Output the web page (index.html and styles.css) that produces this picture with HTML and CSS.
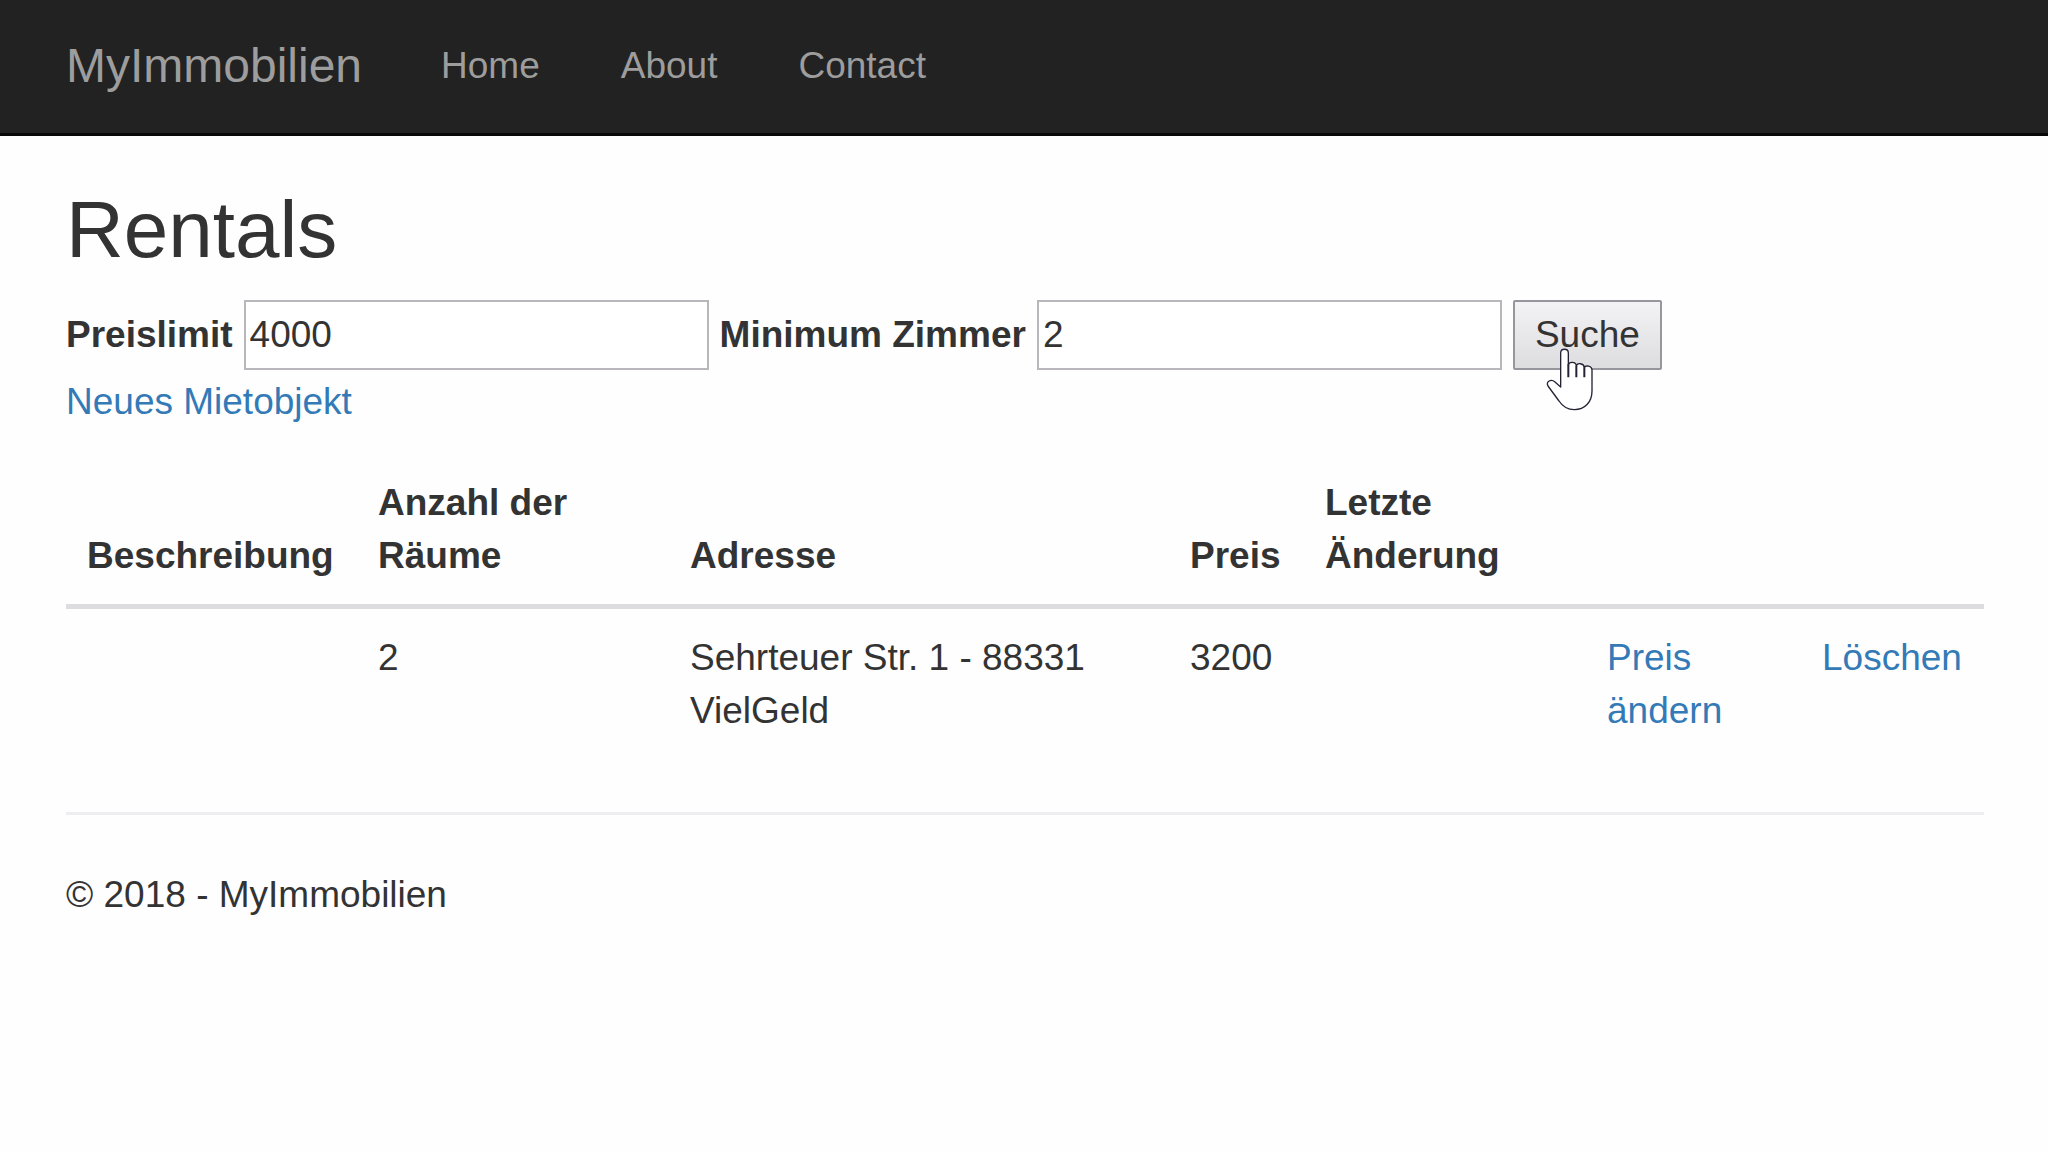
FILE: index.html
```html
<!DOCTYPE html>
<html lang="de">
<head>
<meta charset="utf-8">
<meta name="viewport" content="width=device-width, initial-scale=1">
<title>Rentals - MyImmobilien</title>
<link rel="stylesheet" href="styles.css">
</head>
<body>
<header class="navbar">
  <a class="brand" href="#">MyImmobilien</a>
  <nav class="nav">
    <a href="#">Home</a>
    <a href="#">About</a>
    <a href="#">Contact</a>
  </nav>
</header>
<main class="content">
  <h2 class="title">Rentals</h2>
  <form class="search">
    <label for="limit">Preislimit</label>
    <input id="limit" type="text" value="4000">
    <label for="rooms">Minimum Zimmer</label>
    <input id="rooms" type="text" value="2">
    <div class="submit">
      <button type="button">Suche</button>
      <svg class="pointer" viewBox="138 173 141 189" aria-hidden="true">
        <path d="M182 290V188C182 173 205 173 205 188V224C207 213 227 213 229 226C232 217 251 218 253 231C257 224 276 226 276 240V302C276 336 254 358 223 358C204 358 187 347 177 332L144 287C136 273 154 265 165 275Z" fill="#fff" stroke="#252235" stroke-width="4" stroke-linejoin="round"/>
        <path d="M205 222V261M229 226V261M253 231V261" fill="none" stroke="#252235" stroke-width="6"/>
      </svg>
    </div>
  </form>
  <p class="create"><a href="#">Neues Mietobjekt</a></p>
  <table class="rentals">
    <colgroup>
      <col class="col-description">
      <col class="col-rooms">
      <col class="col-address">
      <col class="col-price">
      <col class="col-changed">
      <col class="col-edit">
      <col class="col-delete">
    </colgroup>
    <thead>
      <tr>
        <th>Beschreibung</th>
        <th>Anzahl der Räume</th>
        <th>Adresse</th>
        <th>Preis</th>
        <th>Letzte Änderung</th>
        <th></th>
        <th></th>
      </tr>
    </thead>
    <tbody>
      <tr>
        <td></td>
        <td>2</td>
        <td>Sehrteuer Str. 1 - 88331 VielGeld</td>
        <td>3200</td>
        <td></td>
        <td><a href="#">Preis ändern</a></td>
        <td><a href="#">Löschen</a></td>
      </tr>
    </tbody>
  </table>
  <hr class="divider">
  <footer>© 2018 - MyImmobilien</footer>
</main>
</body>
</html>
```

FILE: styles.css
```css
* {
  box-sizing: border-box;
}

body {
  margin: 0;
  background: #fefefe;
  color: #333;
  font: 37px/53px "Liberation Sans", Arial, sans-serif;
}

a {
  color: #337ab7;
  text-decoration: none;
}

.navbar {
  display: flex;
  align-items: center;
  gap: 39px;
  padding: 39px 66px 41px;
  background: #222;
  border-bottom: 3px solid #080808;
}

.navbar a {
  color: #9d9d9d;
}

.brand {
  font-size: 48px;
}

.nav {
  display: flex;
  gap: 1px;
}

.nav a {
  padding: 0 40px;
}

.content {
  padding: 50px 64px 53px 66px;
}

.title {
  margin: 0 0 26px;
  font-size: 80px;
  font-weight: 400;
  line-height: 88px;
}

.search {
  display: flex;
  flex-wrap: wrap;
  align-items: center;
  gap: 11px;
}

.search label {
  padding-bottom: 2px;
  font-weight: 700;
}

.search input {
  width: 465px;
  height: 70px;
  padding: 0 4px;
  border: 2px solid #b9b7bc;
  background: #fff;
  color: inherit;
  font: inherit;
}

.submit {
  position: relative;
}

.submit button {
  display: block;
  height: 70px;
  padding: 0 20px 2px;
  border: 2px solid #98969d;
  border-radius: 2px;
  background: linear-gradient(#f3f2f4, #dddcdf);
  color: inherit;
  font: inherit;
}

.pointer {
  position: absolute;
  left: 33px;
  top: 48px;
  width: 47px;
  height: 63px;
}

.create {
  margin: 5px 0 27px;
}

.rentals {
  width: 100%;
  table-layout: fixed;
  border-collapse: separate;
  border-spacing: 0;
}

.rentals th,
.rentals td {
  padding: 22px 21px 21px;
  text-align: left;
  vertical-align: top;
}

.rentals th {
  padding: 21px 21px 22px;
  vertical-align: bottom;
  border-bottom: 5px solid #dddcdf;
}

.col-description {
  width: 291px;
}

.col-rooms {
  width: 312px;
}

.col-price {
  width: 135px;
}

.col-changed {
  width: 282px;
}

.col-edit {
  width: 215px;
}

.col-delete {
  width: 183px;
}

.divider {
  height: 3px;
  margin: 54px 0 53px;
  border: 0;
  background: #eeedef;
}
```
